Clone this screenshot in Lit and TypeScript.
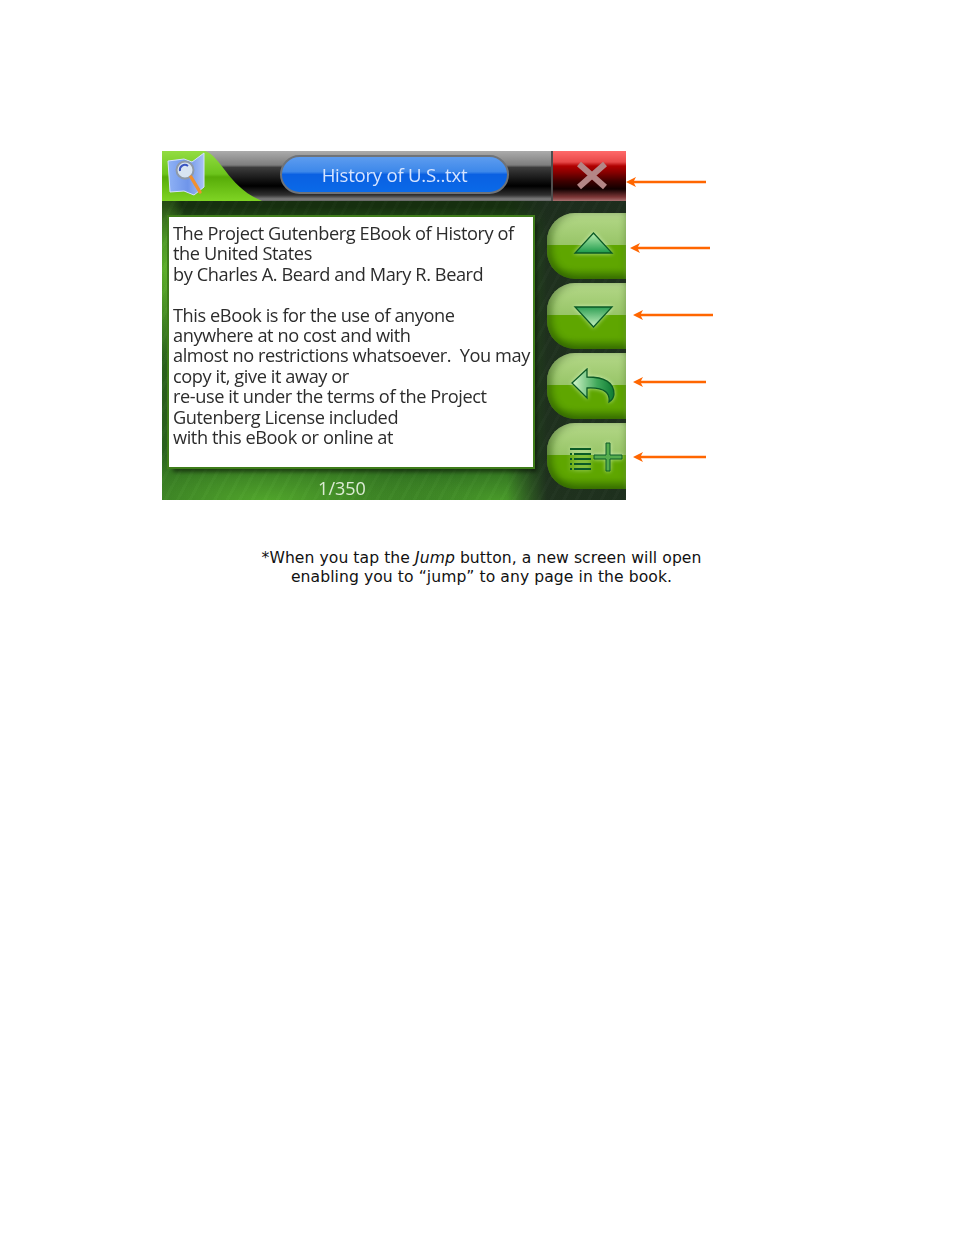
import { LitElement, html, css } from "lit";
import { customElement } from "lit/decorators.js";

const LINES = [
  "The Project Gutenberg EBook of History of",
  "the United States",
  "by Charles A. Beard and Mary R. Beard",
  "\u00a0",
  "This eBook is for the use of anyone",
  "anywhere at no cost and with",
  "almost no restrictions whatsoever.  You may",
  "copy it, give it away or",
  "re-use it under the terms of the Project",
  "Gutenberg License included",
  "with this eBook or online at",
];

const ARROWS: [string, number][] = [["a1", 80], ["a2", 80], ["a3", 80], ["a4", 73], ["a5", 73]];

@customElement("app-root")
export class AppRoot extends LitElement {
  static styles = css`
    :host { display: block; width: 954px; height: 1235px; background: #fff; font-family: "DejaVu Sans", Verdana, sans-serif; }
    .page { display: flex; flex-direction: column; padding: 151px 0 0 162px; }
    .row { display: flex; align-items: flex-start; }
    .screen { width: 464px; height: 349px; display: flex; flex-direction: column; flex: none; overflow: hidden; filter: blur(.4px);
      background:
        repeating-linear-gradient(118deg, rgba(255,255,255,.014) 0 3px, rgba(0,0,0,.018) 3px 11px),
        linear-gradient(90deg, rgba(30,46,30,0) 0, rgba(30,46,30,0) 345px, rgba(30,46,30,.95) 385px, rgba(30,46,30,.95) 100%),
        radial-gradient(ellipse 24px 90px at 4px 120px, rgba(100,185,45,.9) 0%, rgba(100,185,45,0) 100%),
        radial-gradient(ellipse 210px 56px at 105px 350px, #52a82c 0%, rgba(82,168,44,0) 100%),
        radial-gradient(ellipse 130px 46px at 335px 350px, #4a9d2a 0%, rgba(74,157,42,0) 100%),
        linear-gradient(180deg, #16300f 0, #16300f 16%, #2f6e1e 26%, #2a5f1c 72%, #2a6620 100%); }
    .title { height: 50px; flex: none; position: relative;
      background: linear-gradient(180deg, #ababab 0, #7e7e7e 28%, #3c3c3c 33%, #0c0c0c 62%, #000 70%, #303030 88%, #7c7c7c 96%, #666 100%); }
    .wedge { position: absolute; left: 0; top: 0; }
    .pill { position: absolute; left: 118px; top: 4px; width: 229px; height: 39px; box-sizing: border-box; border-radius: 20px;
      border: 2.5px solid #6f7378; background: linear-gradient(180deg, #5d9cef 0, #3d88ea 42%, #0a60e2 50%, #0a6ae8 100%);
      color: #d6e4ff; font: 18.6px "Open Sans", "DejaVu Sans", sans-serif; letter-spacing: -.25px;
      display: flex; align-items: center; justify-content: center; }
    .close { position: absolute; right: 0; top: 0; width: 75px; height: 50px; box-sizing: border-box; border-left: 2px solid #4e4e4e;
      background: linear-gradient(180deg, #ff6a6a 0, #e84848 22%, #b00000 30%, #8a0000 42%, #400000 60%, #100000 76%, #7c3636 92%, #a87070 100%); }
    .close svg { display: block; }
    .body { flex: 1; display: flex; }
    .left { display: flex; flex-direction: column; flex: none; }
    .doc { width: 364px; height: 250px; margin: 16px 0 0 7px; box-sizing: border-box; flex: none; background: #fff;
      outline: 2px solid #3f7d1a; box-shadow: 4px 5px 4px rgba(0,0,0,.5);
      padding: 6px 0 0 4px; color: #2c2c2c; font: 18.2px/20.4px "Open Sans", "DejaVu Sans", sans-serif; letter-spacing: -.42px; white-space: pre; }
    .line { display: block; }
    .status { text-align: center; width: 360px; color: #dcebd4; font: 18px/20px "Open Sans", "DejaVu Sans", sans-serif; margin: 11px 0 0; }
    .side { margin: 12px 0 0 14px; width: 79px; display: flex; flex-direction: column; gap: 4px; flex: none; }
    .btn { width: 79px; height: 66px; box-sizing: border-box; padding-left: 23px; border-radius: 28px 0 0 28px; display: flex; align-items: center;
      background: linear-gradient(180deg, #b4d888 0, #98c568 48%, #5fa600 48.5%, #5fa600 82%, #4e8f00 100%);
      box-shadow: inset 5px 0 7px rgba(30,70,0,.4), inset 0 -5px 7px rgba(40,90,0,.45), inset 0 3px 4px rgba(225,245,200,.35); }
    .btn svg { display: block; filter: drop-shadow(0 0 2px rgba(225,255,205,.7)); }
    .arrows { position: relative; width: 100px; height: 349px; }
    .arrow { position: absolute; }
    .a1 { top: 26px; left: 0; }
    .a2 { top: 92px; left: 4px; }
    .a3 { top: 159px; left: 7px; }
    .a4 { top: 226px; left: 7px; }
    .a5 { top: 301px; left: 7px; }
    .note { margin: 49px 0 0 0; width: 639px; text-align: center; color: #111; font-size: 15.6px; line-height: 19px; letter-spacing: .07px; }
    .note em { font-style: italic; }
  `;

  render() {
    return html`<div class="page">
      <div class="row">
        <div class="screen">
          <div class="title">
            <svg class="wedge" width="110" height="50" viewBox="0 0 110 50">
              <defs>
                <linearGradient id="wg" x1="0" y1="0" x2="0" y2="1"><stop offset="0" stop-color="#93dc42"/><stop offset=".46" stop-color="#6cc41c"/><stop offset=".52" stop-color="#57ac08"/><stop offset="1" stop-color="#7fd424"/></linearGradient>
                <linearGradient id="bk" x1="0" y1="0" x2="1" y2="0"><stop offset="0" stop-color="#8fb2f5"/><stop offset=".55" stop-color="#6f95ea"/><stop offset="1" stop-color="#a9c2f5"/></linearGradient>
                <linearGradient id="g1" x1="0" y1="0" x2="0" y2="1"><stop offset="0" stop-color="#bcefb2"/><stop offset="1" stop-color="#1c9a4a"/></linearGradient>
                <linearGradient id="g2" x1="0" y1="0" x2="0" y2="1"><stop offset="0" stop-color="#2f9f55"/><stop offset="1" stop-color="#c8f3c0"/></linearGradient>
                <linearGradient id="g3" x1="0" y1="0" x2="1" y2="0"><stop offset="0" stop-color="#d6f8cc"/><stop offset=".6" stop-color="#3fa85a"/><stop offset="1" stop-color="#0e7a33"/></linearGradient>
              </defs>
              <path d="M0 0 H43 C60 6 66 36 100 50 H0 Z" fill="url(#wg)"/>
              <path d="M6 10 L22 8 L30 11 L42 2 V36 L32 44 L22 40 L8 41 Z" fill="url(#bk)" stroke="#d5e2ff" stroke-width="1"/>
              <circle cx="23" cy="19" r="8.5" fill="#d8e4f2" stroke="#8f9aa8" stroke-width="2"/>
              <path d="M18 20 a5 5 0 0 1 8 -5" stroke="#3a55c0" stroke-width="2" fill="none"/>
              <path d="M29 26 L38 41" stroke="#f09030" stroke-width="3.4" stroke-linecap="round"/>
            </svg>
            <div class="pill">History of U.S..txt</div>
            <div class="close">
              <svg width="73" height="50" viewBox="0 0 73 50"><path d="M26 13 L52 36 M52 13 L26 36" stroke="#b48686" stroke-width="6"/></svg>
            </div>
          </div>
          <div class="body">
            <div class="left">
              <div class="doc">${LINES.map((l) => html`<span class="line">${l}</span>`)}</div>
              <p class="status">1/350</p>
            </div>
            <div class="side">
              <div class="btn"><svg width="54" height="36" viewBox="0 0 54 36"><path d="M23.5 5 L42 25 H5 Z" fill="url(#g1)" stroke="#0b5a26" stroke-width="1.3"/></svg></div>
              <div class="btn"><svg width="54" height="36" viewBox="0 0 54 36"><path d="M5 9 H42 L23.5 29 Z" fill="url(#g2)" stroke="#0b5a26" stroke-width="1.3"/></svg></div>
              <div class="btn"><svg width="54" height="36" viewBox="0 0 54 36"><path d="M2 15 L17 1 V9 C30 9 44 12 44 26 C44 30 42 32 39 34 C40 26 36 19 17 20 V30 Z" fill="url(#g3)" stroke="#0b5a26" stroke-width="1.3"/></svg></div>
              <div class="btn"><svg width="54" height="36" viewBox="0 0 54 36">
                <path d="M0 10 H21 V12 H0 Z M0 15 H2 V17 H0 Z M4 15 H21 V17 H4 Z M0 20 H2 V22 H0 Z M4 20 H21 V22 H4 Z M0 25 H2 V27 H0 Z M4 25 H21 V27 H4 Z M0 30 H2 V32 H0 Z M4 30 H21 V32 H4 Z" fill="#0b5a26"/>
                <path d="M36 5 H40 V17 H52 V21 H40 V33 H36 V21 H24 V17 H36 Z" fill="#55ad4e" stroke="#0b5a26" stroke-width="1"/>
              </svg></div>
            </div>
          </div>
        </div>
        <div class="arrows">
          ${ARROWS.map(([c, w]) => html`<svg class="arrow ${c}" width=${w} height="10" viewBox="0 0 ${w} 10"><path d="M0 5 L10 0 L8 3.8 H${w} V6.2 H8 L10 10 Z" fill="#ff6600"/></svg>`)}
        </div>
      </div>
      <div class="note">*When you tap the <em>Jump</em> button, a new screen will open<br>enabling you to “jump” to any page in the book.</div>
    </div>`;
  }
}
